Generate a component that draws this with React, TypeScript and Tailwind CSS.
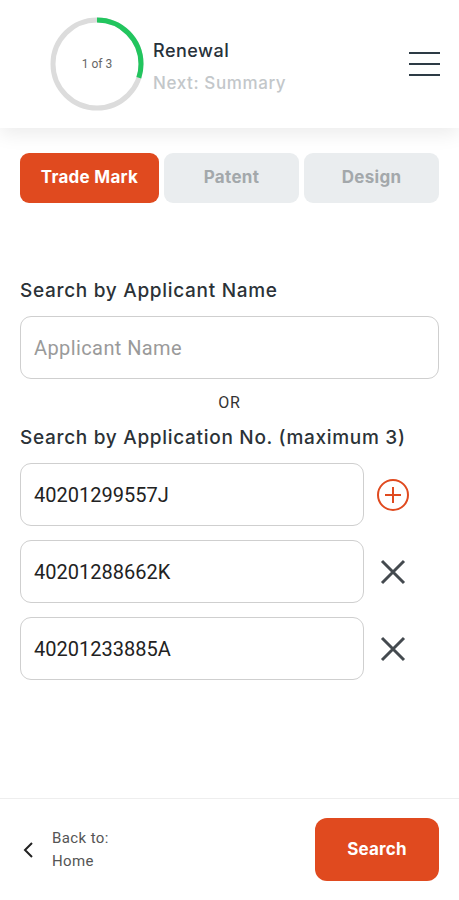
import { useState } from "react";

const appNos = ["40201299557J", "40201288662K", "40201233885A"];

function Progress() {
  const r = 44;
  const c = 2 * Math.PI * r;
  const done = c * 0.3;
  return (
    <svg width="96" height="96" viewBox="0 0 96 96" className="shrink-0">
      <circle cx="48" cy="48" r={r} fill="none" stroke="#dcdcdc" strokeWidth="5" />
      <circle
        cx="48"
        cy="48"
        r={r}
        fill="none"
        stroke="#22c55e"
        strokeWidth="5"
        strokeDasharray={`${done} ${c}`}
        transform="rotate(-90 48 48)"
      />
      <text
        x="48"
        y="52"
        textAnchor="middle"
        fontSize="12"
        fill="#666"
        fontFamily="Roboto, sans-serif"
      >
        1 of 3
      </text>
    </svg>
  );
}

export default function App() {
  const [tab, setTab] = useState("Trade Mark");

  return (
    <div
      className="h-screen w-full flex flex-col bg-white text-[#2b3237]"
      style={{ fontFamily: "Inter, 'Noto Sans', sans-serif" }}
    >
      {/* Header */}
      <div className="h-[128px] shrink-0 flex items-center pl-[49px] pr-[19px] bg-white shadow-[0_6px_18px_rgba(0,0,0,0.08)] relative z-10">
        <Progress />
        <div className="ml-[8px] flex-1 flex flex-col gap-[8px] mt-[6px]">
          <div className="text-[18px] leading-6 font-medium tracking-[0.5px] text-[#27313a]">Renewal</div>
          <div className="text-[17px] leading-6 font-medium tracking-[0.6px] text-[#c3c7ca]">Next: Summary</div>
        </div>
        <button className="w-[31px] flex flex-col gap-[9px]">
          <span className="block h-[2px] bg-[#2d3b45]" />
          <span className="block h-[2px] bg-[#2d3b45]" />
          <span className="block h-[2px] bg-[#2d3b45]" />
        </button>
      </div>

      {/* Main */}
      <div className="flex-1 px-5 pt-[25px]">
        <div className="flex gap-[5px]">
          {["Trade Mark", "Patent", "Design"].map((t) => (
            <button
              key={t}
              onClick={() => setTab(t)}
              className={`h-[50px] rounded-[9px] text-[17px] font-bold tracking-[0.3px] ${
                t === "Trade Mark" ? "w-[139px]" : "flex-1"
              } ${tab === t ? "bg-[#e04a1f] text-white" : "bg-[#eaedef] text-[#a3a8ab]"}`}
            >
              {t}
            </button>
          ))}
        </div>

        <div className="mt-[75px] text-[19px] font-medium leading-[26px] tracking-[0.7px]">
          Search by Applicant Name
        </div>
        <input
          className="mt-[12px] w-full h-[63px] rounded-[11px] border border-[#cfcfcf] px-[13px] text-[20px] tracking-[0.4px] outline-none placeholder:text-[#9a9a9a]"
          style={{ fontFamily: "Roboto, sans-serif" }}
          placeholder="Applicant Name"
        />
        <div
          className="mt-[14px] text-center text-[16px] leading-5 tracking-[0.8px] text-[#333]"
          style={{ fontFamily: "Roboto, sans-serif" }}
        >
          OR
        </div>
        <div className="mt-[12px] text-[19px] font-medium leading-[26px] tracking-[0.7px]">
          Search by Application No. (maximum 3)
        </div>

        <div className="mt-[12px] flex flex-col gap-[14px]">
          {appNos.map((n, i) => (
            <div key={n} className="flex items-center">
              <input
                className="w-[344px] h-[63px] rounded-[11px] border border-[#cfcfcf] px-[13px] text-[20px] text-[#222] outline-none"
                style={{ fontFamily: "Roboto, sans-serif" }}
                defaultValue={n}
              />
              <div className="flex-1 flex justify-center pr-[18px]">
                {i === 0 ? (
                  <svg width="34" height="34" viewBox="0 0 34 34">
                    <circle cx="17" cy="17" r="15" fill="none" stroke="#e04a1f" strokeWidth="2" />
                    <path d="M17 9v16M9 17h16" stroke="#e04a1f" strokeWidth="2" />
                  </svg>
                ) : (
                  <svg width="28" height="28" viewBox="0 0 28 28">
                    <path d="M3 3l22 22M25 3L3 25" stroke="#444a4f" strokeWidth="3" />
                  </svg>
                )}
              </div>
            </div>
          ))}
        </div>
      </div>

      {/* Footer */}
      <div className="h-[102px] shrink-0 border-t border-[#eeeeee] flex items-start pt-[19px] pl-[22px] pr-[20px]">
        <div className="h-[63px] flex items-center flex-1" style={{ fontFamily: "Roboto, sans-serif" }}>
          <svg width="14" height="16" viewBox="0 0 14 16">
            <path d="M10 1L3 8l7 7" fill="none" stroke="#222" strokeWidth="2" />
          </svg>
          <div className="ml-[16px] text-[15px] leading-[23px] tracking-[0.4px] text-[#555]">
            <div>Back to:</div>
            <div>Home</div>
          </div>
        </div>
        <button className="w-[124px] h-[63px] rounded-[12px] bg-[#e04a1f] text-white text-[17px] font-bold tracking-[0.2px]">
          Search
        </button>
      </div>
    </div>
  );
}
